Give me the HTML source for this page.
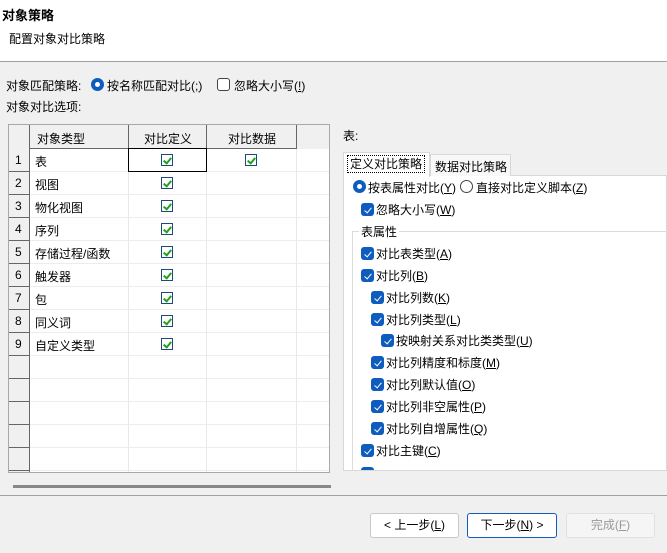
<!DOCTYPE html>
<html><head><meta charset="utf-8"><style>
*{margin:0;padding:0;box-sizing:border-box}
body{width:667px;height:553px;background:#f0f0f0;font-family:"Liberation Sans","Noto Sans CJK SC",sans-serif;font-size:12px;color:#000;position:relative;overflow:hidden}
.a{position:absolute;white-space:nowrap}
.hdr{left:0;top:0;width:667px;height:62px;background:#fff;border-bottom:1px solid #a0a0a0}
.cb{position:absolute;width:12px;height:12px;border:1px solid #1e4a78;background:#fff}
.cb:after{content:"";position:absolute;left:3px;top:1px;width:3px;height:6px;border:solid #22a020;border-width:0 2px 2px 0;transform:rotate(40deg)}
.bc{position:absolute;width:13px;height:13px;border-radius:3px;background:#0f5cbf}
.bc:after{content:"";position:absolute;left:4.5px;top:2.5px;width:3px;height:6px;border:solid #fff;border-width:0 1.2px 1.2px 0;transform:rotate(40deg)}
.btn{position:absolute;top:513px;height:25px;border:1px solid #c8c8c8;border-radius:3px;background:#fff;text-align:center;line-height:23px;font-size:12px}
u{text-decoration:underline}
</style></head><body>
<div class="a hdr"></div>
<div class="a" style="left:2px;top:5px;font-weight:bold;font-size:13px">对象策略</div>
<div class="a" style="left:9px;top:30px">配置对象对比策略</div>

<div class="a" style="left:6px;top:77px">对象匹配策略:</div>
<div class="a" style="left:91px;top:78px;width:13px;height:13px;border-radius:50%;border:4px solid #0f5cbf;background:#fff"></div>
<div class="a" style="left:107px;top:77px">按名称匹配对比(<u>;</u>)</div>
<div class="a" style="left:217px;top:78px;width:13px;height:13px;border:1px solid #444;border-radius:3px;background:#fff"></div>
<div class="a" style="left:234px;top:77px">忽略大小写(<u>!</u>)</div>
<div class="a" style="left:6px;top:98px">对象对比选项:</div>

<!-- table -->
<div class="a" style="left:8px;top:124px;width:322px;height:349px;border:1px solid #a8a8a8;background:#fff"></div>
<div class="a" style="left:9px;top:125px;width:320px;height:24px;background:#f0f0f0"></div>
<div class="a" style="left:9px;top:125px;width:21px;height:347px;background:#f0f0f0;border-right:1px solid #666"></div>
<div class="a" style="left:30px;top:125px;width:267px;height:24px;border-bottom:1px solid #666;border-right:1px solid #666"></div>
<div class="a" style="left:128px;top:125px;width:1px;height:347px;background:#e8e8e8"></div>
<div class="a" style="left:128px;top:125px;width:1px;height:24px;background:#666"></div>
<div class="a" style="left:206px;top:125px;width:1px;height:347px;background:#e8e8e8"></div>
<div class="a" style="left:206px;top:125px;width:1px;height:24px;background:#666"></div>
<div class="a" style="left:296px;top:149px;width:1px;height:323px;background:#e8e8e8"></div>
<div class="a" style="left:37px;top:130px">对象类型</div>
<div class="a" style="left:144px;top:130px">对比定义</div>
<div class="a" style="left:228px;top:130px">对比数据</div>
<div id="rows"></div>
<div class="a" style="left:128px;top:148px;width:79px;height:24px;border:1px solid #000"></div>

<div class="a" style="left:13px;top:485px;width:318px;height:3px;background:#888"></div>
<div class="a" style="left:0;top:495px;width:667px;height:1px;background:#a0a0a0"></div>

<!-- right -->
<div class="a" style="left:343px;top:127px">表:</div>
<div class="a" style="left:343px;top:175px;width:324px;height:296px;background:#fff;border:1px solid #d8d8d8"></div>
<div class="a" style="left:430px;top:154px;width:81px;height:22px;background:#f8f8f8;border:1px solid #d8d8d8;border-bottom:none"></div>
<div class="a" style="left:435px;top:158px">数据对比策略</div>
<div class="a" style="left:343px;top:152px;width:87px;height:25px;background:#fff;border:1px solid #d8d8d8;border-bottom:none"></div>
<div class="a" style="left:347px;top:155px;height:18px;border:1px dotted #000;padding:0 2px;line-height:16px">定义对比策略</div>
<div class="a" style="left:353px;top:180px;width:13px;height:13px;border-radius:50%;border:4px solid #0f5cbf;background:#fff"></div>
<div class="a" style="left:368px;top:179px">按表属性对比(<u>Y</u>)</div>
<div class="a" style="left:460px;top:180px;width:13px;height:13px;border-radius:50%;border:1px solid #444;background:#fff"></div>
<div class="a" style="left:476px;top:179px">直接对比定义脚本(<u>Z</u>)</div>
<div class="a" style="left:352px;top:231px;width:315px;height:240px;border:1px solid #dcdcdc;border-right:none;border-bottom:none"></div>
<div class="a" style="left:359px;top:223px;background:#fff;padding:0 2px">表属性</div>
<div id="opts"></div>

<div class="btn" style="left:370px;width:89px">&lt; 上一步(<u>L</u>)</div>
<div class="btn" style="left:467px;width:90px;border-color:#0f5cbf">下一步(<u>N</u>) &gt;</div>
<div class="btn" style="left:566px;width:89px;background:#f5f5f5;border-color:#e0e0e0;color:#999">完成(<u>F</u>)</div>
<script>
var names=["表","视图","物化视图","序列","存储过程/函数","触发器","包","同义词","自定义类型"],h="";
for(var i=0;i<14;i++){var y=149+i*23;
h+='<div class="a" style="left:9px;top:'+(y+22)+'px;width:21px;height:1px;background:#666"></div>';
h+='<div class="a" style="left:30px;top:'+(y+22)+'px;width:299px;height:1px;background:#ececec"></div>';
if(i<9){h+='<div class="a" style="left:15px;top:'+(y+4)+'px">'+(i+1)+'</div><div class="a" style="left:35px;top:'+(y+4)+'px">'+names[i]+'</div><div class="cb" style="left:161px;top:'+(y+5)+'px"></div>';
if(i==0)h+='<div class="cb" style="left:245px;top:'+(y+5)+'px"></div>';}}
document.getElementById("rows").innerHTML=h;
var o=[[361,209,"忽略大小写(<u>W</u>)"],[361,253,"对比表类型(<u>A</u>)"],[361,275,"对比列(<u>B</u>)"],[371,297,"对比列数(<u>K</u>)"],[371,319,"对比列类型(<u>L</u>)"],[381,340,"按映射关系对比类类型(<u>U</u>)"],[371,362,"对比列精度和标度(<u>M</u>)"],[371,384,"对比列默认值(<u>O</u>)"],[371,406,"对比列非空属性(<u>P</u>)"],[371,428,"对比列自增属性(<u>Q</u>)"],[361,450,"对比主键(<u>C</u>)"]],s="";
o.forEach(function(e){s+='<div class="bc" style="left:'+e[0]+'px;top:'+(e[1]-6)+'px"></div><div class="a" style="left:'+(e[0]+15)+'px;top:'+(e[1]-8)+'px">'+e[2]+'</div>';});
s+='<div class="a" style="left:344px;top:467px;width:322px;height:3px;overflow:hidden"><div class="bc" style="left:17px;top:0"></div></div>';
document.getElementById("opts").innerHTML=s;
</script>
</body></html>
